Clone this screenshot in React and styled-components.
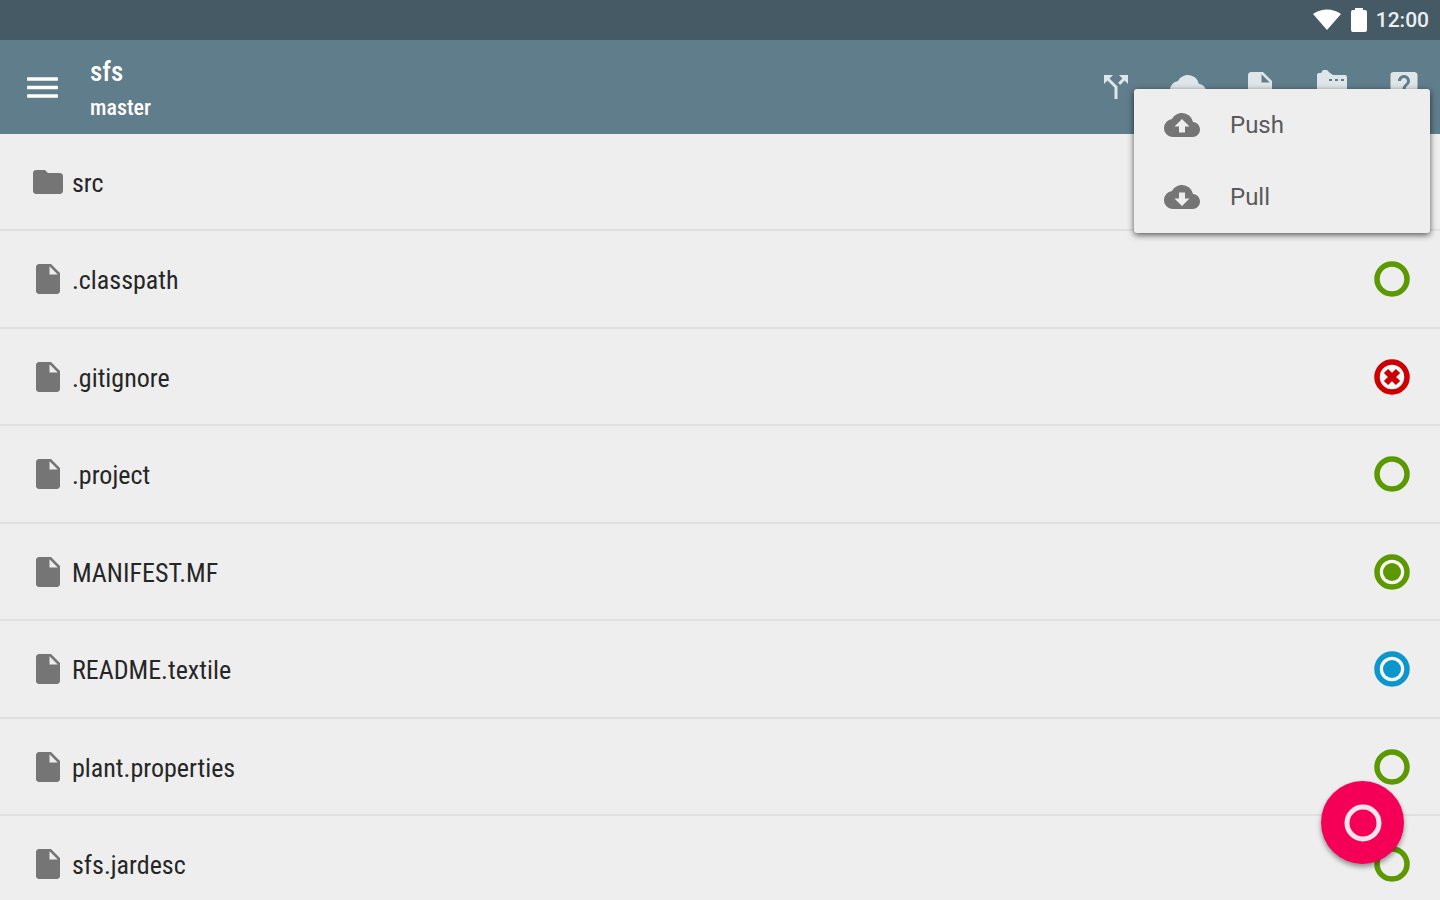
import React from 'react'
import styled, { createGlobalStyle } from 'styled-components';
import {
  MdCallSplit,
  MdCloud,
  MdCloudDownload,
  MdCloudUpload,
  MdFolder,
  MdInsertDriveFile,
  MdLiveHelp,
  MdMenu,
} from 'react-icons/md';

const GlobalStyle = createGlobalStyle`
* {
  box-sizing: border-box;
}
body {
  margin: 0;
  background-color: #eeeeee;
  font-family: "Roboto Condensed", Roboto, sans-serif;
}
`;

const Screen = styled.div`
  height: 100vh;
  display: flex;
  flex-direction: column;
  overflow: hidden;
`;

const StatusBar = styled.div`
  height: 40px;
  flex-shrink: 0;
  padding-right: 11px;
  display: flex;
  align-items: center;
  justify-content: flex-end;
  gap: 8px;
  color: #ffffff;
  background-color: #455a64;
`;

const Clock = styled.time`
  font-family: Roboto, sans-serif;
  font-size: 21px;
  font-weight: 500;
  color: #eceff1;
`;

const AppBar = styled.header`
  height: 94px;
  flex-shrink: 0;
  padding: 0 18px 0 22px;
  display: flex;
  align-items: center;
  color: #ffffff;
  background-color: #607d8b;
`;

const Button = styled.button`
  padding: 0;
  display: flex;
  align-items: center;
  border: none;
  background: none;
  font: inherit;
  color: inherit;
  cursor: pointer;
`;

const Titles = styled.div`
  flex: 1;
  margin-left: 27px;
  padding-top: 6px;
`;

const Title = styled.h1`
  margin: 0;
  font-size: 27px;
  font-weight: 500;
  line-height: 36px;
`;

const Branch = styled.div`
  font-size: 22px;
  font-weight: 500;
  line-height: 36px;
`;

const Actions = styled.div`
  display: flex;
  gap: 36px;
  color: #dfe6ea;
`;

const MenuAnchor = styled.div`
  position: relative;
`;

const Menu = styled.div`
  position: absolute;
  top: 20px;
  right: -224px;
  z-index: 2;
  width: 296px;
  background-color: #eeeeee;
  border-radius: 3px;
  box-shadow: 0 2px 6px rgba(0, 0, 0, 0.65);
`;

const MenuItem = styled(Button)`
  width: 100%;
  height: 72px;
  padding: 0 30px;
  gap: 30px;
  color: #757575;
`;

const MenuLabel = styled.span`
  font-family: Roboto, sans-serif;
  font-size: 24px;
  color: #5a5a5a;
`;

const FileList = styled.ul`
  margin: 0;
  padding: 0;
  list-style: none;
`;

const FileRow = styled.li`
  height: 98px;
  padding: 0 30px;
  display: flex;
  align-items: center;
  gap: 6px;
  color: #757575;
  border-bottom: 2px solid #e0e0e0;

  &:nth-child(odd) {
    height: 97px;
  }
`;

const FileName = styled.span`
  flex: 1;
  padding-top: 2px;
  font-size: 26px;
  color: #262626;
`;

const Fab = styled(Button)`
  position: fixed;
  right: 36px;
  bottom: 36px;
  width: 83px;
  height: 83px;
  justify-content: center;
  border-radius: 50%;
  background-color: #f50057;
  box-shadow: 0 3px 5px rgba(0, 0, 0, 0.4);
`;

const colors = {
  clean: '#5c9900',
  staged: '#5c9900',
  modified: '#0d96cc',
  removed: '#cc0000',
};

const files = [
  { name: 'src', folder: true },
  { name: '.classpath', status: 'clean' },
  { name: '.gitignore', status: 'removed' },
  { name: '.project', status: 'clean' },
  { name: 'MANIFEST.MF', status: 'staged' },
  { name: 'README.textile', status: 'modified' },
  { name: 'plant.properties', status: 'clean' },
  { name: 'sfs.jardesc', status: 'clean' },
];

const StatusIcon = ({ status }) => {
  const color = colors[status];
  return (
    <svg width="36" height="36" viewBox="0 0 36 36" role="img" aria-label={status}>
      <circle cx="18" cy="18" r="15" fill={status === 'clean' ? 'none' : '#f8f8f8'} stroke={color} strokeWidth="5.500" />
      {(status === 'staged' || status === 'modified') && <circle cx="18" cy="18" r="9" fill={color} />}
      {status === 'removed' && <path d="M12 12L24 24M24 12L12 24" stroke={color} strokeWidth="6" />}
    </svg>
  );
};

const Wifi = () => (
  <svg width="30" height="24" viewBox="0 0 30 24" fill="currentColor">
    <path d="M1 6C9 0 21 0 29 6L15 22Z" />
  </svg>
);

const Battery = () => (
  <svg width="18" height="26" viewBox="0 0 18 26" fill="currentColor">
    <path d="M5 3V1H13V3H15A2 2 0 0 1 17 5V23A2 2 0 0 1 15 25H3A2 2 0 0 1 1 23V5A2 2 0 0 1 3 3Z" />
  </svg>
);

const FolderDots = () => (
  <svg width="36" height="36" viewBox="0 0 36 36">
    <path fill="currentColor" d="M3 6A2 2 0 0 1 5 4H7L9 1H13L16 4L19 6H31A2 2 0 0 1 33 8V30A2 2 0 0 1 31 32H5A2 2 0 0 1 3 30Z" />
    <path stroke="#607d8b" strokeWidth="2" strokeDasharray="3 3" d="M15 11H30" />
  </svg>
);

const App = () => {
  return (
    <Screen>
      <GlobalStyle />
      <StatusBar>
        <Wifi />
        <Battery />
        <Clock>12:00</Clock>
      </StatusBar>

      <AppBar>
        <Button aria-label="Menu"><MdMenu size={41} /></Button>
        <Titles>
          <Title>sfs</Title>
          <Branch>master</Branch>
        </Titles>
        <Actions>
          <Button aria-label="Branch"><MdCallSplit size={36} /></Button>
          <MenuAnchor>
            <Button aria-label="Remote"><MdCloud size={36} /></Button>
            <Menu>
              <MenuItem>
                <MdCloudUpload size={36} />
                <MenuLabel>Push</MenuLabel>
              </MenuItem>
              <MenuItem>
                <MdCloudDownload size={36} />
                <MenuLabel>Pull</MenuLabel>
              </MenuItem>
            </Menu>
          </MenuAnchor>
          <Button aria-label="New file"><MdInsertDriveFile size={36} /></Button>
          <Button aria-label="New folder"><FolderDots /></Button>
          <Button aria-label="Help"><MdLiveHelp size={36} /></Button>
        </Actions>
      </AppBar>

      <FileList>
        {files.map((file) => (
          <FileRow key={file.name}>
            {file.folder ? <MdFolder size={36} /> : <MdInsertDriveFile size={36} />}
            <FileName>{file.name}</FileName>
            {file.status && <StatusIcon status={file.status} />}
          </FileRow>
        ))}
      </FileList>

      <Fab aria-label="Commit">
        <svg width="38" height="38" viewBox="0 0 38 38">
          <circle cx="19" cy="19" r="16" fill="none" stroke="#fde3ec" strokeWidth="5" />
        </svg>
      </Fab>
    </Screen>
  )
}

export default App
